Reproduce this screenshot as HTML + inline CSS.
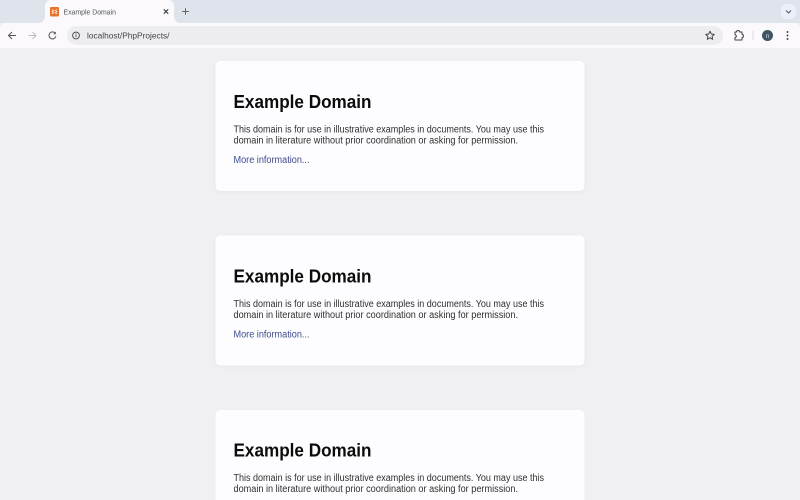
<!DOCTYPE html>
<html lang="en">
<head>
<meta charset="utf-8">
<title>Example Domain</title>
<style>
html,body{margin:0;padding:0;width:800px;height:500px;overflow:hidden;background:#f0f0f2}
svg{position:absolute;left:0;top:0;display:block;filter:blur(.25px)}
text{font-family:"Liberation Sans",sans-serif}
.h{font-size:18px;font-weight:700;fill:#0c0c0c}
.p{font-size:10px;fill:#2e2e2e}
.a{font-size:10px;fill:#3c4a8e}
</style>
</head>
<body>
<svg width="800" height="500" viewBox="0 0 800 500" xmlns="http://www.w3.org/2000/svg">
<defs>
<filter id="s" x="-5%" y="-5%" width="110%" height="115%"><feDropShadow dx="0" dy="1" stdDeviation="2" flood-color="#000" flood-opacity=".04"/></filter>
</defs>
<!-- tab strip -->
<rect width="800" height="23" fill="#dfe3ec"/>
<path d="M38 23q6 0 7-6V6a6 6 0 0 1 6-6H168a6 6 0 0 1 6 6V17q1 6 7 6Z" fill="#fbf9fb"/>
<path d="M0 48V29a6 6 0 0 1 6-6H794a6 6 0 0 1 6 6V48Z" fill="#fbf9fb"/>
<!-- favicon -->
<rect x="50" y="7" width="9" height="9.500" rx="1.200" fill="#e9702a"/>
<path d="M52 9.300l1.700 1.300-1.700 1.100 1.700 1.100-1.700 1.300M57 9.300l-1.700 1.300 1.700 1.100-1.700 1.100 1.700 1.300" stroke="#fde3d0" stroke-width=".9" fill="none"/>
<text x="63.500" y="14.500" font-size="7.700" fill="#55565a" textLength="52.500" lengthAdjust="spacingAndGlyphs">Example Domain</text>
<path d="M163.800 9.300l4.400 4.400M168.200 9.300l-4.400 4.400" stroke="#444" stroke-width="1.100"/>
<path d="M185.500 8.200v6.600M182.200 11.500h6.600" stroke="#666" stroke-width="1"/>
<!-- tab search -->
<rect x="781" y="4" width="15" height="15" rx="5" fill="#eceff9"/>
<path d="M786 10.500l2.500 2.500 2.500-2.500" stroke="#555" stroke-width="1" fill="none"/>
<!-- nav icons -->
<path d="M16 35.500H9M12 32l-3.500 3.500 3.500 3.500" stroke="#555" stroke-width="1" fill="none"/>
<path d="M28.500 35.500h7M32.500 32l3.500 3.500-3.500 3.500" stroke="#bdbdc1" stroke-width="1" fill="none"/>
<path d="M55.300 33.300a3.500 3.500 0 1 0 .6 3" stroke="#555" stroke-width="1" fill="none"/>
<path d="M55.800 31.600v2.600h-2.600z" fill="#555"/>
<!-- omnibox -->
<rect x="67" y="26" width="656" height="19" rx="9.500" fill="#edecf0"/>
<circle cx="76" cy="35.500" r="3.400" fill="none" stroke="#444" stroke-width=".9"/>
<path d="M76 34.800v2.300" stroke="#444" stroke-width=".9"/>
<circle cx="76" cy="33.600" r=".5" fill="#444"/>
<text x="87" y="38.500" font-size="8.600" fill="#444" textLength="82.500" lengthAdjust="spacingAndGlyphs">localhost/PhpProjects/</text>
<path d="M710 31.200l1.300 2.800 3 .35-2.200 2 .6 3-2.700-1.500-2.700 1.500.6-3-2.200-2 3-.35z" fill="none" stroke="#444" stroke-width=".95" stroke-linejoin="round"/>
<!-- extensions puzzle -->
<path d="M735 32h1.500a1.500 1.500 0 0 1 3 0h2.500v2.500a1.500 1.500 0 0 1 0 3v2.500h-7v-2.500a1.300 1.300 0 0 0 0-2.600V32z" fill="none" stroke="#444" stroke-width="1" stroke-linejoin="round"/>
<rect x="752.500" y="31" width="1" height="9" fill="#d5deea"/>
<circle cx="767.500" cy="35.500" r="5.500" fill="#3e5563"/>
<text x="767.500" y="38" font-size="6.500" fill="#d8dde0" text-anchor="middle">n</text>
<circle cx="787.500" cy="32" r=".95" fill="#444"/>
<circle cx="787.500" cy="35.500" r=".95" fill="#444"/>
<circle cx="787.500" cy="39" r=".95" fill="#444"/>
<!-- page -->
<rect x="0" y="48" width="800" height="452" fill="#f0f0f2"/>

<rect x="215.500" y="61" width="369" height="130" rx="5" fill="#fdfdff" filter="url(#s)"/>
<text class="h" x="233.500" y="108" textLength="138" lengthAdjust="spacingAndGlyphs">Example Domain</text>
<text class="p" x="233.500" y="132.500" textLength="310.500" lengthAdjust="spacingAndGlyphs">This domain is for use in illustrative examples in documents. You may use this</text>
<text class="p" x="233.500" y="143.500" textLength="284.500" lengthAdjust="spacingAndGlyphs">domain in literature without prior coordination or asking for permission.</text>
<text class="a" x="233.500" y="163" textLength="76" lengthAdjust="spacingAndGlyphs">More information...</text>

<rect x="215.500" y="235.500" width="369" height="130" rx="5" fill="#fdfdff" filter="url(#s)"/>
<text class="h" x="233.500" y="282.500" textLength="138" lengthAdjust="spacingAndGlyphs">Example Domain</text>
<text class="p" x="233.500" y="307" textLength="310.500" lengthAdjust="spacingAndGlyphs">This domain is for use in illustrative examples in documents. You may use this</text>
<text class="p" x="233.500" y="318" textLength="284.500" lengthAdjust="spacingAndGlyphs">domain in literature without prior coordination or asking for permission.</text>
<text class="a" x="233.500" y="337.500" textLength="76" lengthAdjust="spacingAndGlyphs">More information...</text>

<path d="M215.500 500V415a5 5 0 0 1 5-5H579.500a5 5 0 0 1 5 5V500Z" fill="#fdfdff"/>
<text class="h" x="233.500" y="456.500" textLength="138" lengthAdjust="spacingAndGlyphs">Example Domain</text>
<text class="p" x="233.500" y="481" textLength="310.500" lengthAdjust="spacingAndGlyphs">This domain is for use in illustrative examples in documents. You may use this</text>
<text class="p" x="233.500" y="492" textLength="284.500" lengthAdjust="spacingAndGlyphs">domain in literature without prior coordination or asking for permission.</text>
</svg>
</body>
</html>
